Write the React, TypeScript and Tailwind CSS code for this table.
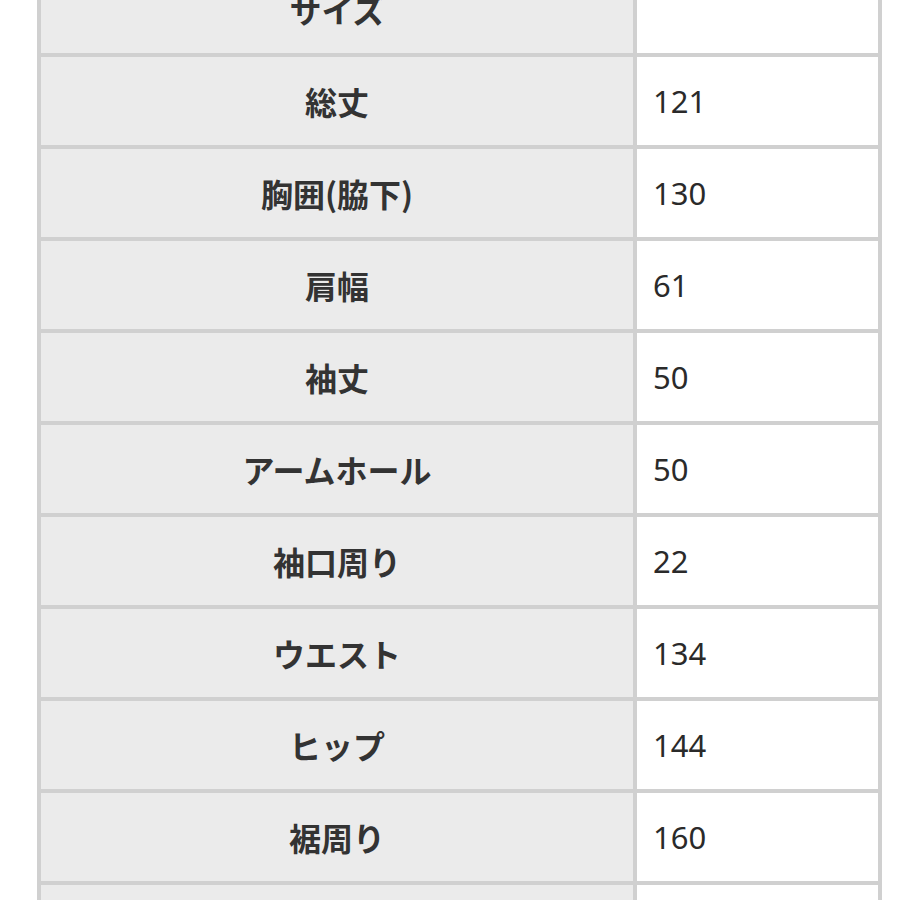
const rows: [string, string][] = [
  ["サイズ", ""],
  ["総丈", "121"],
  ["胸囲(脇下)", "130"],
  ["肩幅", "61"],
  ["袖丈", "50"],
  ["アームホール", "50"],
  ["袖口周り", "22"],
  ["ウエスト", "134"],
  ["ヒップ", "144"],
  ["裾周り", "160"],
  ["", ""],
];

export default function App() {
  return (
    <div className="h-[900px] w-[900px] overflow-hidden bg-white">
      <div className="ml-[37px] mt-[-39px] grid w-[845px] grid-cols-[592px_241px] gap-[4px] bg-[#d0d0d0] p-[4px]">
        {rows.map(([label, value], i) => (
          <div key={i} className="contents">
            <div className="flex h-[88px] items-center justify-center bg-[#ebebeb] text-[32px] font-bold text-[#333] [font-family:'Noto_Sans_CJK_JP',sans-serif]">
              {label}
            </div>
            <div className="flex h-[88px] items-center bg-white pl-4 text-[31px] font-normal text-[#2a2a2a] [font-family:'Noto_Sans','Noto_Sans_CJK_JP',sans-serif]">
              {value}
            </div>
          </div>
        ))}
      </div>
    </div>
  );
}
